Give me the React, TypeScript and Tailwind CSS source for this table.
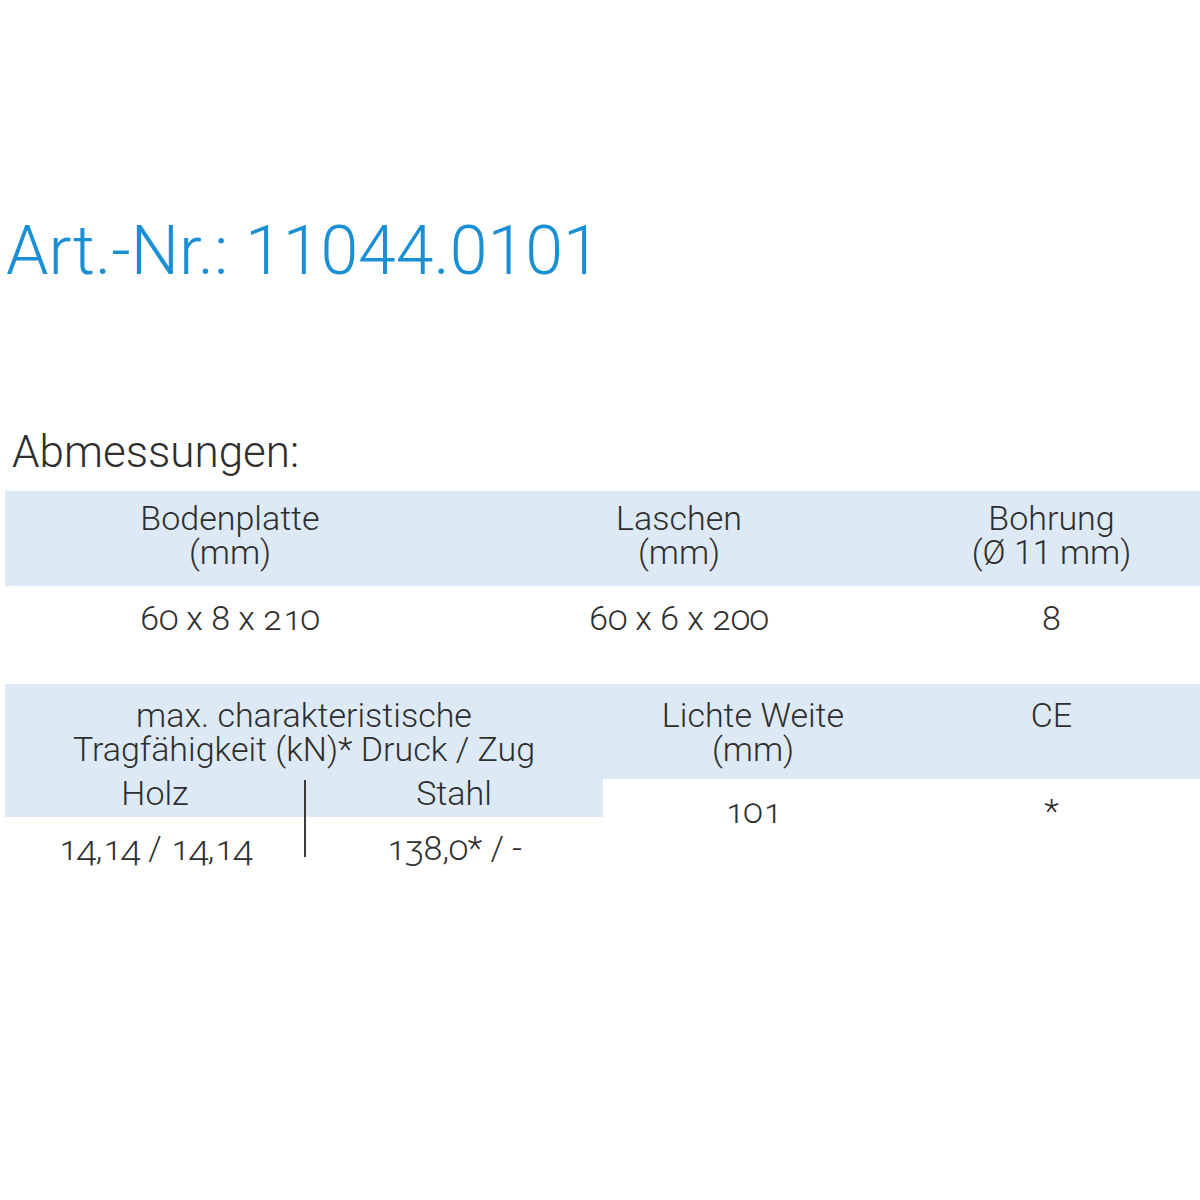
export default function App() {
  return (
    <div className="w-[1200px] h-[1200px] bg-white font-['Roboto',sans-serif] font-light text-[#2e2e2e]">
      <h1 className="pt-[217px] pl-[6px] text-[68px] leading-none font-light text-[#1a8fd3]">Art.-Nr.: 11044.0101</h1>

      <h2 className="mt-[145px] pl-[12px] text-[44px] leading-none font-light text-[#2e2e2e]">Abmessungen:</h2>

      {/* Abmessungen */}
      <div className="mt-[17px] ml-[5px] w-[1195px] grid grid-cols-[450px_448px_297px] text-center text-[34px] leading-[34px]">
        <div className="bg-[#dde9f5] pt-[10px] pb-[17px]">Bodenplatte<br />(mm)</div>
        <div className="bg-[#dde9f5] pt-[10px] pb-[17px]">Laschen<br />(mm)</div>
        <div className="bg-[#dde9f5] pt-[10px] pb-[17px]">Bohrung<br />(Ø 11 mm)</div>
        <div className="h-[98px] pt-[15px] [font-variant-numeric:oldstyle-nums]">60 x 8 x 210</div>
        <div className="h-[98px] pt-[15px] [font-variant-numeric:oldstyle-nums]">60 x 6 x 200</div>
        <div className="h-[98px] pt-[15px] [font-variant-numeric:oldstyle-nums]">8</div>
      </div>

      {/* Tragfähigkeit */}
      <div className="ml-[5px] w-[1195px] flex text-center text-[34px] leading-[34px]">
        <div className="relative w-[598px]">
          <div className="bg-[#dde9f5] pt-[14px]">
            max. charakteristische<br />Tragfähigkeit (kN)* Druck / Zug
            <div className="grid grid-cols-[300px_298px] pt-[10px] pb-[7px]">
              <div>Holz</div>
              <div>Stahl</div>
            </div>
          </div>
          <div className="grid grid-cols-[300px_298px] pt-[14px] [font-variant-numeric:oldstyle-nums]">
            <div>14,14 / 14,14</div>
            <div>138,0* / -</div>
          </div>
          <div className="absolute left-[299px] top-[96px] h-[77px] w-[2px] bg-[#3a3a3a]" />
        </div>
        <div className="flex-1 grid grid-cols-[300px_297px] content-start">
          <div className="bg-[#dde9f5] pt-[14px] pb-[13px]">Lichte Weite<br />(mm)</div>
          <div className="bg-[#dde9f5] pt-[14px] pb-[13px]">CE</div>
          <div className="pt-[15px] [font-variant-numeric:oldstyle-nums]">101</div>
          <div className="pt-[15px]">*</div>
        </div>
      </div>
    </div>
  )
}
